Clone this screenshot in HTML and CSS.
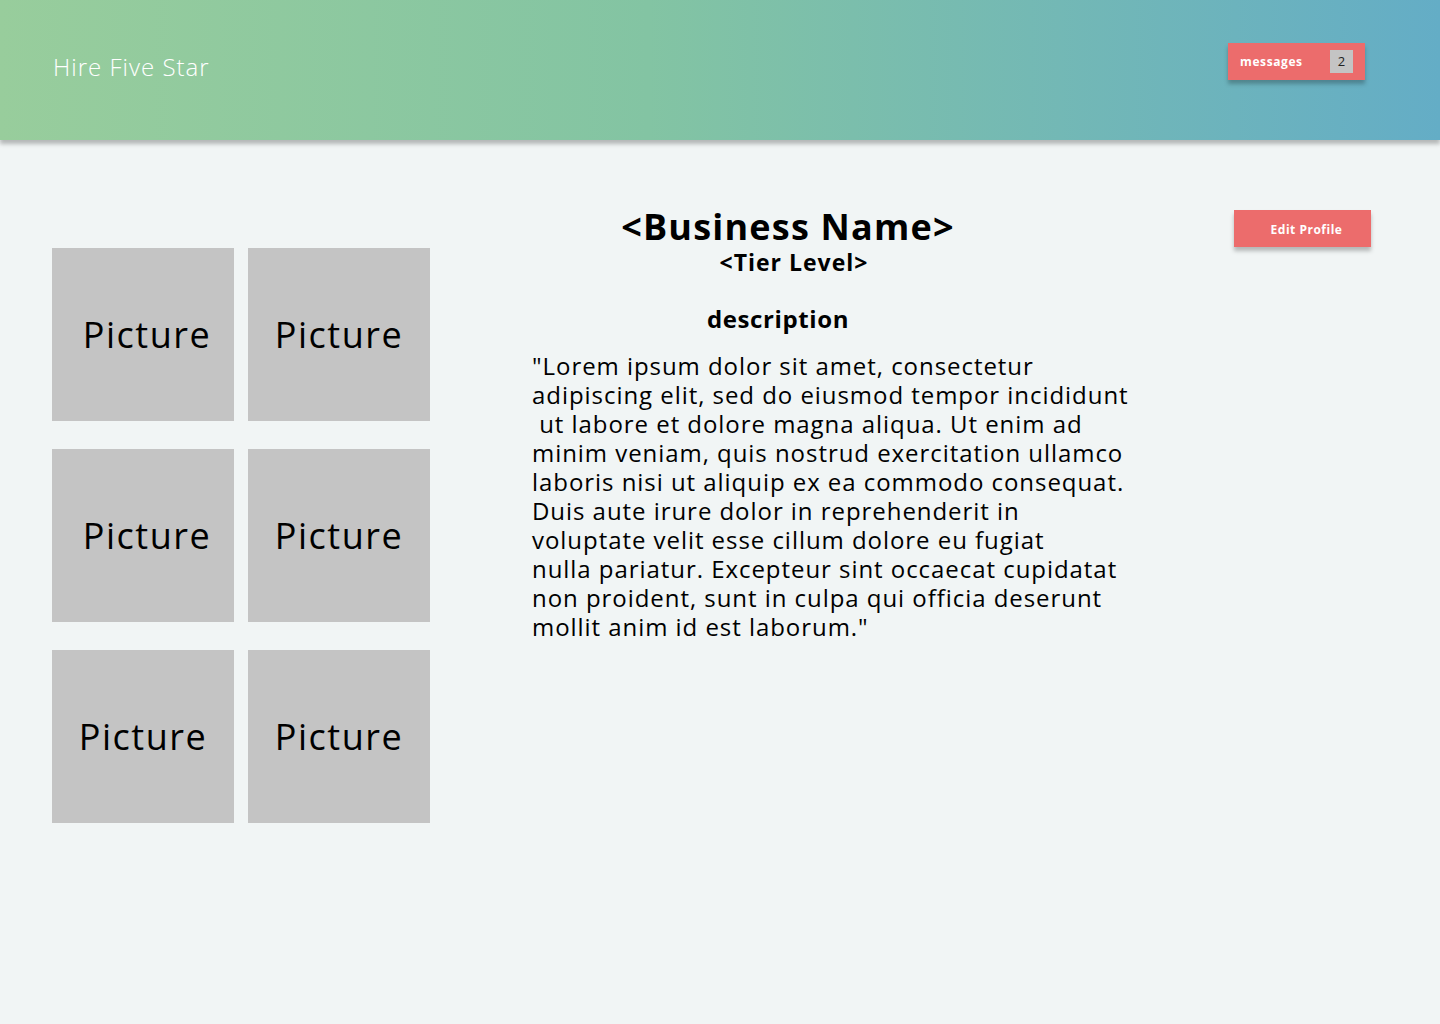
FILE: index.html
```html
<!DOCTYPE html>
<html lang="en">
<head>
<meta charset="UTF-8" />
<meta name="viewport" content="width=device-width, initial-scale=1.0"/>
<title>Hire Five Star - Profile</title>
<link rel="stylesheet" href="styles.css">
</head>
<body>

<!-- Top bar -->
<header id="top-bar">
  <h1 id="brand">Hire Five Star</h1>
  <button id="messages-button">
    <span class="btn-label">messages</span>
    <span id="messages-count">2</span>
  </button>
</header>

<!-- Profile page -->
<main id="profile">
  <div id="gallery">
    <div class="picture shift">Picture</div>
    <div class="picture">Picture</div>
    <div class="picture shift">Picture</div>
    <div class="picture">Picture</div>
    <div class="picture">Picture</div>
    <div class="picture">Picture</div>
  </div>

  <section id="info">
    <h2 id="business-name">&lt;Business Name&gt;</h2>
    <h3 id="tier-level">&lt;Tier Level&gt;</h3>
    <h4 id="description-title">description</h4>
    <p id="description">"Lorem ipsum dolor sit amet, consectetur<br>
adipiscing elit, sed do eiusmod tempor incididunt<br>
&nbsp;ut labore et dolore magna aliqua. Ut enim ad<br>
minim veniam, quis nostrud exercitation ullamco<br>
laboris nisi ut aliquip ex ea commodo consequat.<br>
Duis aute irure dolor in reprehenderit in<br>
voluptate velit esse cillum dolore eu fugiat<br>
nulla pariatur. Excepteur sint occaecat cupidatat<br>
non proident, sunt in culpa qui officia deserunt<br>
mollit anim id est laborum."</p>
  </section>

  <div id="actions">
    <button id="edit-profile">Edit Profile</button>
  </div>
</main>

</body>
</html>
```

FILE: styles.css
```css
body {
  margin: 0;
  font-family: "Open Sans", Arial, sans-serif;
  background: #f1f5f5;
  color: #000;
}

#top-bar {
  height: 140px;
  display: flex;
  align-items: center;
  justify-content: space-between;
  padding: 0 75px 0 53px;
  box-sizing: border-box;
  background: linear-gradient(to right, #98cd9c, #83c4a3 45%, #64adc6);
  box-shadow: 0 4px 4px rgba(0, 0, 0, 0.25);
}
#brand {
  margin: -7px 0 0;
  color: #fff;
  font-size: 24px;
  font-weight: 300;
  letter-spacing: 1px;
}

#messages-button {
  display: flex;
  align-items: center;
  justify-content: space-between;
  width: 137px;
  height: 37px;
  margin-top: -18px;
  padding: 0 12px;
  box-sizing: border-box;
  border: none;
  background: #ec6c6c;
  box-shadow: 0 4px 4px rgba(0, 0, 0, 0.25);
  color: #fff;
  font-family: inherit;
  font-size: 12px;
  font-weight: 700;
  letter-spacing: 0.6px;
  cursor: pointer;
}
#messages-count {
  width: 23px;
  height: 23px;
  line-height: 23px;
  background: #c4c4c4;
  color: #222;
  font-weight: 400;
  font-size: 13px;
  letter-spacing: 0;
  text-align: center;
}

#profile {
  display: flex;
  align-items: flex-start;
  padding: 70px 69px 0 52px;
}

#gallery {
  display: grid;
  grid-template-columns: repeat(2, 182px);
  grid-auto-rows: 173px;
  column-gap: 14px;
  row-gap: 28px;
  margin-top: 38px;
}
.picture {
  display: flex;
  align-items: center;
  justify-content: center;
  background: #c4c4c4;
  font-size: 36px;
  font-weight: 400;
  letter-spacing: 1.5px;
}
.picture.shift {
  padding-left: 8px;
}

#info {
  width: 512px;
  margin-left: 102px;
  text-align: center;
}
#business-name {
  margin: -5px 0 0;
  font-size: 36px;
  font-weight: 700;
  line-height: 44px;
  letter-spacing: 1.2px;
}
#tier-level {
  margin: -1px 0 0 12px;
  font-size: 23px;
  font-weight: 700;
  line-height: 28px;
  letter-spacing: 1px;
}
#description-title {
  margin: 28px 20px 0 0;
  font-size: 24px;
  font-weight: 700;
  line-height: 30px;
  letter-spacing: 0.6px;
}
#description {
  margin: 17px 0 0;
  text-align: left;
  white-space: nowrap;
  font-size: 24px;
  line-height: 29px;
  letter-spacing: 0.95px;
}

#actions {
  margin-left: auto;
}
#edit-profile {
  width: 137px;
  height: 37px;
  padding: 1px 0 0 8px;
  border: none;
  background: #ec6c6c;
  box-shadow: 0 4px 4px rgba(0, 0, 0, 0.25);
  color: #fff;
  font-family: inherit;
  font-size: 12px;
  font-weight: 700;
  letter-spacing: 0.5px;
  cursor: pointer;
}
```
